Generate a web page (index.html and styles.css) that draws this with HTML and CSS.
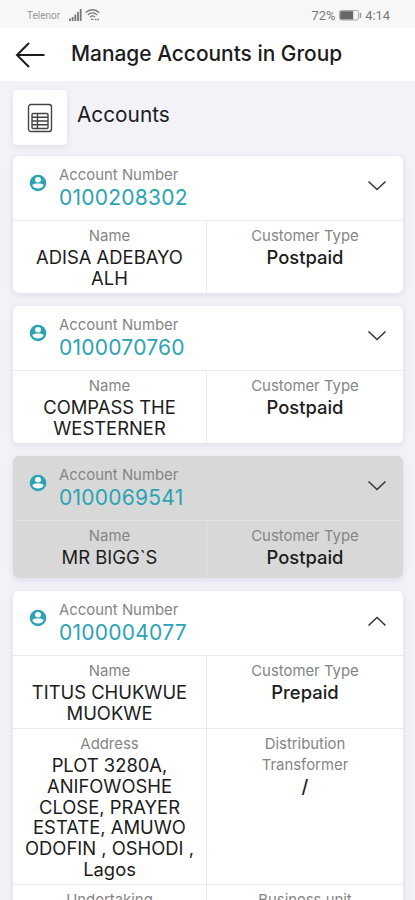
FILE: index.html
```html
<!DOCTYPE html>
<html lang="en">
<head>
    <meta charset="UTF-8">
    <meta name="viewport" content="width=device-width, initial-scale=1.0">
    <title>Manage Accounts in Group</title>
    <link rel="stylesheet" href="styles.css">
</head>
<body>
    <svg class="defs" width="0" height="0">
        <symbol id="user" viewBox="0 0 18 18">
            <circle cx="9" cy="9" r="8.3" fill="#2ba3b3"/>
            <rect x="6.100" y="2.900" width="5.800" height="5.600" rx="2.700" fill="#fff"/>
            <path d="M3.400 11.400c0-1.400 2.600-1.900 5.600-1.900s5.600.5 5.600 1.900c-1 1.900-3 3-5.600 3s-4.600-1.100-5.600-3z" fill="#fff"/>
        </symbol>
        <symbol id="down" viewBox="0 0 20 12">
            <path d="M1.500 1.500L10 9.500l8.500-8" fill="none" stroke="#333" stroke-width="1.500"/>
        </symbol>
        <symbol id="up" viewBox="0 0 20 12">
            <path d="M1.500 10.500L10 2.500l8.500 8" fill="none" stroke="#333" stroke-width="1.500"/>
        </symbol>
    </svg>

    <div class="status">
        <span class="carrier">Telenor</span>
        <svg class="signal" width="13" height="12" viewBox="0 0 13 12" fill="#777">
            <path d="M0 9.500h1.800V12H0zM2.700 8h1.800v4H2.700zM5.400 5.500h1.800V12H5.400zM8.100 3h1.800v9H8.100zM10.800 0h1.800v12h-1.800z"/>
        </svg>
        <svg class="wifi" width="15" height="12" viewBox="0 0 15 12" fill="none" stroke="#777" stroke-width="1.300">
            <path d="M.7 3.600C4.500-.2 10.500-.2 14.300 3.600M2.800 5.900c2.700-2.600 6.700-2.600 9.400 0M5 8.100c1.500-1.400 3.500-1.400 5 0"/>
            <path d="M6 10.300h2.500M10 10.500h1.500M12.500 10.500H14"/>
        </svg>
        <span class="percent">72%</span>
        <svg class="battery" width="23" height="11" viewBox="0 0 23 11">
            <rect x=".5" y=".5" width="19" height="9.500" rx="2" fill="none" stroke="#aaa"/>
            <rect x="1.200" y="1.200" width="13" height="8.200" fill="#666"/>
            <path d="M21.500 3v5" stroke="#999" stroke-width="1.500"/>
        </svg>
        <span class="time">4:14</span>
    </div>

    <div class="header">
        <svg class="back" width="30" height="26" viewBox="0 0 30 26" fill="none" stroke="#1c1c1c" stroke-width="2">
            <path d="M29.500 13H2M14 1L2 13l12 12"/>
        </svg>
        <h1 class="title">Manage Accounts in Group</h1>
    </div>

    <div class="section">
        <div class="tile">
            <svg width="26" height="30" viewBox="0 0 26 30" fill="none" stroke="#444" stroke-width="1.400">
                <rect x="1.500" y="1.500" width="23" height="27" rx="2.500"/>
                <rect x="5" y="10.500" width="16" height="15" rx="1"/>
                <path d="M5 14.200h16M5 18h16M5 21.800h16M10.500 10.500v15"/>
            </svg>
        </div>
        <h2 class="subtitle">Accounts</h2>
    </div>

    <div class="list">
        <div class="card">
            <div class="top">
                <svg class="user"><use href="#user"/></svg>
                <div class="account">
                    <div class="label">Account Number</div>
                    <div class="number">0100208302</div>
                </div>
                <svg class="chevron"><use href="#down"/></svg>
            </div>
            <div class="row">
                <div class="cell"><div class="label">Name</div><div class="value">ADISA ADEBAYO ALH</div></div>
                <div class="cell"><div class="label">Customer Type</div><div class="value type">Postpaid</div></div>
            </div>
        </div>

        <div class="card">
            <div class="top">
                <svg class="user"><use href="#user"/></svg>
                <div class="account">
                    <div class="label">Account Number</div>
                    <div class="number">0100070760</div>
                </div>
                <svg class="chevron"><use href="#down"/></svg>
            </div>
            <div class="row">
                <div class="cell"><div class="label">Name</div><div class="value">COMPASS THE WESTERNER</div></div>
                <div class="cell"><div class="label">Customer Type</div><div class="value type">Postpaid</div></div>
            </div>
        </div>

        <div class="card selected">
            <div class="top">
                <svg class="user"><use href="#user"/></svg>
                <div class="account">
                    <div class="label">Account Number</div>
                    <div class="number">0100069541</div>
                </div>
                <svg class="chevron"><use href="#down"/></svg>
            </div>
            <div class="row">
                <div class="cell"><div class="label">Name</div><div class="value">MR BIGG`S</div></div>
                <div class="cell"><div class="label">Customer Type</div><div class="value type">Postpaid</div></div>
            </div>
        </div>

        <div class="card">
            <div class="top">
                <svg class="user"><use href="#user"/></svg>
                <div class="account">
                    <div class="label">Account Number</div>
                    <div class="number">0100004077</div>
                </div>
                <svg class="chevron"><use href="#up"/></svg>
            </div>
            <div class="row">
                <div class="cell"><div class="label">Name</div><div class="value">TITUS CHUKWUE MUOKWE</div></div>
                <div class="cell"><div class="label">Customer Type</div><div class="value type">Prepaid</div></div>
            </div>
            <div class="row">
                <div class="cell"><div class="label">Address</div><div class="value">PLOT 3280A, ANIFOWOSHE<br>CLOSE, PRAYER<br>ESTATE, AMUWO<br>ODOFIN , OSHODI ,<br>Lagos</div></div>
                <div class="cell"><div class="label">Distribution<br>Transformer</div><div class="value type">/</div></div>
            </div>
            <div class="row">
                <div class="cell"><div class="label">Undertaking</div></div>
                <div class="cell"><div class="label">Business unit</div></div>
            </div>
        </div>
    </div>
</body>
</html>
```
FILE: styles.css
```css
body {
    margin: 0;
    height: 900px;
    overflow: hidden;
    background-color: #f2f2f8;
    font-family: Inter, "Liberation Sans", sans-serif;
    color: #1c1c1c;
}
.defs {
    display: block;
}
.status {
    display: flex;
    align-items: center;
    height: 28px;
    padding: 2px 25px 0 27px;
    box-sizing: border-box;
    background-color: #f7f7f7;
    color: #777;
    font-family: Roboto, sans-serif;
    font-size: 12.8px;
}
.carrier {
    width: 42px;
    font-size: 10px;
    color: #999;
}
.wifi {
    margin-left: 3px;
}
.percent {
    margin-left: auto;
}
.battery {
    margin: 0 3px 0 4px;
}
.header {
    display: flex;
    align-items: center;
    height: 53px;
    padding-left: 15px;
    background-color: #fff;
}
.title {
    margin: 0 0 2px 26px;
    font-size: 20.9px;
    font-weight: 500;
    line-height: 26px;
}
.section {
    display: flex;
    padding: 9px 13px 11px;
}
.tile {
    display: flex;
    align-items: center;
    justify-content: center;
    width: 54px;
    height: 55px;
    padding-top: 1px;
    box-sizing: border-box;
    background-color: #fff;
    border-radius: 4px;
    box-shadow: 0 2px 6px rgba(90, 90, 150, 0.12);
}
.subtitle {
    margin: 12px 0 0 10px;
    font-size: 20.8px;
    font-weight: 400;
    line-height: 26px;
}
.list {
    display: flex;
    flex-direction: column;
    gap: 13px;
    padding: 0 12px 0 13px;
}
.card {
    background-color: #fff;
    border-radius: 6px;
    box-shadow: 0 2px 7px rgba(90, 90, 150, 0.14);
}
.top {
    display: flex;
    height: 64px;
    padding: 0 16px;
}
.user {
    width: 18px;
    height: 18px;
    margin-top: 18px;
}
.account {
    flex-grow: 1;
    padding: 9px 0 0 12px;
}
.chevron {
    width: 20px;
    height: 12px;
    margin-top: 24px;
}
.label {
    color: #858585;
    font-size: 14.9px;
    line-height: 20.8px;
}
.number {
    color: #2ba3b3;
    font-size: 21px;
    line-height: 23px;
    letter-spacing: 0.25px;
}
.row {
    display: flex;
    min-height: 57px;
    border-top: 1px solid #ebebed;
}
.cell {
    flex: 1;
    padding: 5.4px 10px 4.2px;
    text-align: center;
}
.cell:first-child {
    flex: 0 0 173px;
    border-right: 1px solid #ebebed;
}
.value {
    font-size: 18.4px;
    line-height: 20.8px;
}
.type {
    font-weight: 500;
}
.selected {
    background-color: #d8d8d8;
}
.selected .row,
.selected .cell {
    border-color: #e2e2e4;
}
```
